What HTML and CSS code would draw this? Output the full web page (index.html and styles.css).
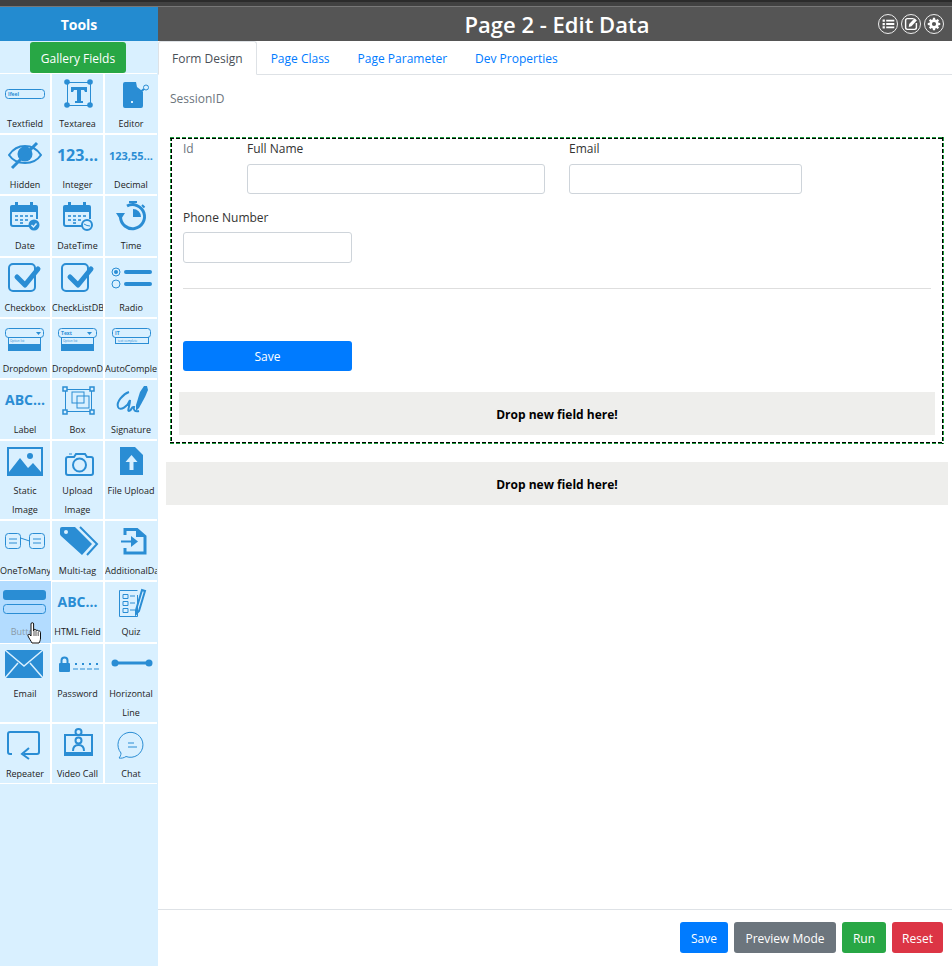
FILE: index.html
```html
<!DOCTYPE html>
<html>
<head>
    <title>Page 2 - Edit Data</title>
    <link rel="stylesheet" href="styles.css">
</head>
<body>
    <div class="topstrip"></div>
    <div class="app">
        <aside class="sidebar">
            <div class="tools-title">Tools</div>
            <div class="gallery-row"><button class="btn btn-green gallery-btn">Gallery Fields</button></div>
            <div class="tool-grid">
                <div class="tool">
                    <svg class="ic" viewBox="0 0 50 40"><rect class="ln" x="5.500" y="15.500" width="39" height="9" rx="3"/><text class="tiny" x="8" y="22">Ifeel</text></svg>
                    <span>Textfield</span>
                </div>
                <div class="tool">
                    <svg class="ic" viewBox="0 0 50 40"><rect class="ln" x="14.500" y="8.500" width="23" height="23"/><path class="fl" d="M18 13h16v5h-2l-1-2h-3v11h2v2h-8v-2h2V16h-3l-1 2h-2z"/><circle class="fl" cx="14" cy="8" r="2.800"/><circle class="fl" cx="37" cy="8" r="2.800"/><circle class="fl" cx="14" cy="31" r="2.800"/><circle class="fl" cx="37" cy="31" r="2.800"/></svg>
                    <span>Textarea</span>
                </div>
                <div class="tool">
                    <svg class="ic" viewBox="0 0 50 40"><path class="fl" d="M19 8h11l1 5 4 3 2 2v14a2 2 0 0 1-2 2H19a2 2 0 0 1-2-2V10a2 2 0 0 1 2-2z"/><path class="ln2" d="M32 20l6-5"/><circle class="ln" cx="40" cy="13.500" r="2.500"/><rect x="25" y="27" width="2" height="2" fill="#d9f0ff"/></svg>
                    <span>Editor</span>
                </div>

                <div class="tool">
                    <svg class="ic" viewBox="0 0 50 40"><path class="ln2" d="M9 20c4-6 10-9 16-9s12 3 16 9c-4 6-10 8-16 8S13 26 9 20z"/><circle class="fl" cx="25" cy="19" r="7.500"/><path class="ln3" d="M12 33L37 8"/></svg>
                    <span>Hidden</span>
                </div>
                <div class="tool">
                    <div class="ic-text big">123...</div>
                    <span>Integer</span>
                </div>
                <div class="tool">
                    <div class="ic-text small">123,55...</div>
                    <span>Decimal</span>
                </div>

                <div class="tool">
                    <svg class="ic" viewBox="0 0 50 40"><path class="fl" d="M12 9h24a2 2 0 0 1 2 2v5H10v-5a2 2 0 0 1 2-2z"/><path class="fl" d="M15 6h3v6h-3zM30 6h3v6h-3z"/><path class="ln2" d="M11 16v12a2 2 0 0 0 2 2h17M37 16v7"/><path class="dots" d="M15 19h3v2h-3zM20 19h3v2h-3zM25 19h3v2h-3zM30 19h3v2h-3zM15 23h3v2h-3zM20 23h3v2h-3zM25 23h3v2h-3zM20 26h3v2h-3z"/><circle class="fl" cx="34" cy="29" r="5.500"/><path class="wh" d="M31.500 29l2 2 3-3.500"/></svg>
                    <span>Date</span>
                </div>
                <div class="tool">
                    <svg class="ic" viewBox="0 0 50 40"><path class="fl" d="M12 9h24a2 2 0 0 1 2 2v5H10v-5a2 2 0 0 1 2-2z"/><path class="fl" d="M15 6h3v6h-3zM30 6h3v6h-3z"/><path class="ln2" d="M11 16v12a2 2 0 0 0 2 2h17M37 16v7"/><path class="dots" d="M15 19h3v2h-3zM20 19h3v2h-3zM25 19h3v2h-3zM30 19h3v2h-3zM15 23h3v2h-3zM20 23h3v2h-3zM25 23h3v2h-3zM20 26h3v2h-3z"/><circle class="ln2 bgf" cx="34" cy="29" r="5"/><path class="ln" d="M31 28l3 1.500 3 .5"/></svg>
                    <span>DateTime</span>
                </div>
                <div class="tool">
                    <svg class="ic" viewBox="0 0 50 40"><path class="ln3" d="M21 10a12 12 0 1 1-6.500 11"/><path class="fl" d="M10 17h9l-4.500 7zM27 13a8 8 0 0 1 8 8h-8z"/><path class="ln2" d="M23 6h8M27 6v3M36 9l2.500 2.500"/></svg>
                    <span>Time</span>
                </div>

                <div class="tool">
                    <svg class="ic" viewBox="0 0 50 40"><rect class="ln2" x="9" y="6" width="26" height="27" rx="4"/><path class="ln4" d="M17 19l8 8 13-16"/></svg>
                    <span>Checkbox</span>
                </div>
                <div class="tool">
                    <svg class="ic" viewBox="0 0 50 40"><rect class="ln2" x="9" y="6" width="26" height="27" rx="4"/><path class="ln4" d="M17 19l8 8 13-16"/></svg>
                    <span>CheckListDB</span>
                </div>
                <div class="tool">
                    <svg class="ic" viewBox="0 0 50 40"><circle class="ln" cx="10" cy="14" r="4"/><circle class="fl" cx="10" cy="14" r="2"/><circle class="ln" cx="10" cy="26" r="4"/><path class="ln4 thin" d="M20 14h24M20 26h24"/></svg>
                    <span>Radio</span>
                </div>

                <div class="tool">
                    <svg class="ic" viewBox="0 0 50 40"><rect class="ln" x="5.500" y="9.500" width="38" height="9" rx="3"/><path class="fl" d="M36 13h5l-2.500 3z"/><rect class="ln" x="8.500" y="18.500" width="32" height="13"/><rect class="fl" x="9" y="25" width="31" height="6"/><text class="tiny micro" x="10" y="23">Option list</text></svg>
                    <span>Dropdown</span>
                </div>
                <div class="tool">
                    <svg class="ic" viewBox="0 0 50 40"><rect class="ln" x="5.500" y="9.500" width="38" height="9" rx="3"/><path class="fl" d="M34 13h5l-2.500 3z"/><text class="tiny" x="8" y="16">Text</text><rect class="ln" x="8.500" y="18.500" width="32" height="13"/><rect class="fl" x="9" y="25" width="31" height="6"/><text class="tiny micro" x="10" y="23">Option list</text></svg>
                    <span>DropdownDB</span>
                </div>
                <div class="tool">
                    <svg class="ic" viewBox="0 0 50 40"><rect class="ln" x="6.500" y="9.500" width="38" height="9" rx="3"/><text class="tiny" x="9" y="16">IT</text><rect class="ln" x="9.500" y="18.500" width="33" height="6"/><text class="tiny micro" x="12" y="23">text complete</text></svg>
                    <span>AutoComplete</span>
                </div>

                <div class="tool">
                    <div class="ic-text mid">ABC...</div>
                    <span>Label</span>
                </div>
                <div class="tool">
                    <svg class="ic" viewBox="0 0 50 40"><rect class="ln" x="12.500" y="9.500" width="26" height="22"/><rect class="ln" x="19" y="12" width="12" height="11"/><rect class="ln" x="24" y="16" width="12" height="12"/><rect class="sq" x="10" y="7" width="4" height="4"/><rect class="sq" x="37" y="7" width="4" height="4"/><rect class="sq" x="10" y="30" width="4" height="4"/><rect class="sq" x="37" y="30" width="4" height="4"/></svg>
                    <span>Box</span>
                </div>
                <div class="tool">
                    <svg class="ic" viewBox="0 0 50 40"><path class="ln2" d="M23 12C17 14 10 22 12 27c2 5 10-1 12-7 0 6-3 11-1 11 3 0 2-5 5-4-1 3 1 5 5 4"/><path class="fl" d="M34 12l4-6h3l1 4-3 7-6 11-3 3v-6z"/></svg>
                    <span>Signature</span>
                </div>

                <div class="tool">
                    <svg class="ic" viewBox="0 0 50 40"><rect class="fl" x="7" y="6" width="36" height="29"/><path fill="#d9f0ff" d="M9 8h32v23l-8-9-5 5-8-10L9 31z"/><circle class="fl" cx="30" cy="15" r="3"/></svg>
                    <span>Static Image</span>
                </div>
                <div class="tool">
                    <svg class="ic" viewBox="0 0 50 40"><path class="ln2" d="M15 16h6l2-3h9l2 3h4a2 2 0 0 1 2 2v14a2 2 0 0 1-2 2H15a2 2 0 0 1-2-2V18a2 2 0 0 1 2-2z"/><circle class="ln2" cx="26.500" cy="24" r="6.500"/><path class="ln" d="M16 13h3"/></svg>
                    <span>Upload Image</span>
                </div>
                <div class="tool">
                    <svg class="ic" viewBox="0 0 50 40"><path class="fl" d="M14 6h15l8 8v20H14z"/><path fill="#d9f0ff" d="M25.500 14l6 7h-4v8h-4v-8h-4z"/></svg>
                    <span>File Upload</span>
                </div>

                <div class="tool">
                    <svg class="ic" viewBox="0 0 50 40"><rect class="ln" x="5.500" y="12.500" width="15" height="15" rx="3"/><rect class="ln" x="29.500" y="12.500" width="15" height="15" rx="3"/><path class="ln" d="M9 18h8M9 22h8M33 18h8M33 22h8M20.500 17l9 3"/></svg>
                    <span>OneToMany</span>
                </div>
                <div class="tool">
                    <svg class="ic" viewBox="0 0 50 40"><path class="fl" d="M9 6h13l17 17-10 11L8 15a3 3 0 0 1-1-2V8a2 2 0 0 1 2-2z"/><circle cx="13" cy="11" r="2" fill="#d9f0ff"/><path class="ln2" d="M27 6l17 17-10 11"/></svg>
                    <span>Multi-tag</span>
                </div>
                <div class="tool">
                    <svg class="ic" viewBox="0 0 50 40"><path class="ln3" d="M19 14V8.500h12l8 7V32H19v-5"/><path class="fl" d="M30 8l9 8h-9z"/><path class="ln2" d="M15 20.500h14"/><path class="fl" d="M25 15l7 5.500-7 5.500z"/></svg>
                    <span>AdditionalData</span>
                </div>

                <div class="tool tool-hover">
                    <svg class="ic" viewBox="0 0 50 40"><rect class="fl" x="3" y="8" width="43" height="10" rx="3"/><rect class="ln" x="3.500" y="22.500" width="42" height="9" rx="3"/></svg>
                    <span>Button</span>
                </div>
                <div class="tool">
                    <div class="ic-text mid">ABC...</div>
                    <span>HTML Field</span>
                </div>
                <div class="tool">
                    <svg class="ic" viewBox="0 0 50 40"><path class="ln" d="M31.500 13V34.500h-18V8.500h18"/><path class="ln" d="M17 12.500h5v4h-5zM17 19.500h5v4h-5zM17 26.500h5v4h-5z"/><path class="ln" d="M24 14h5M24 21h5M24 28h5"/><path class="ln2" d="M30 28l6-20 3 1-6 20-3 3z"/></svg>
                    <span>Quiz</span>
                </div>

                <div class="tool">
                    <svg class="ic" viewBox="0 0 50 40"><rect class="fl" x="5" y="6" width="38" height="28"/><path class="wh" d="M5 6l19 16L43 6M5 34l13-15M43 34L30 19"/></svg>
                    <span>Email</span>
                </div>
                <div class="tool">
                    <svg class="ic" viewBox="0 0 50 40"><rect class="fl" x="6" y="19" width="11" height="9" rx="1"/><path class="ln2" d="M8.500 19v-2.500a3 3 0 0 1 6 0V19"/><path class="ln" d="M20 25h27" stroke-dasharray="5 2"/><path class="dots2" d="M22 19h2v2h-2zM29 19h2v2h-2zM36 19h2v2h-2zM43 19h2v2h-2z"/></svg>
                    <span>Password</span>
                </div>
                <div class="tool">
                    <svg class="ic" viewBox="0 0 50 40"><path class="ln3" d="M7 19h38"/><circle class="fl" cx="9" cy="19" r="3.500"/><circle class="fl" cx="43" cy="19" r="3.500"/></svg>
                    <span>Horizontal Line</span>
                </div>

                <div class="tool">
                    <svg class="ic" viewBox="0 0 50 40"><path class="ln2" d="M12 30h-2a2 2 0 0 1-2-2V10a2 2 0 0 1 2-2h27a2 2 0 0 1 2 2v18a2 2 0 0 1-2 2H24"/><path class="ln2" d="M29 24l-7 6 7 5"/></svg>
                    <span>Repeater</span>
                </div>
                <div class="tool">
                    <svg class="ic" viewBox="0 0 50 40"><rect class="ln2" x="12" y="11" width="27" height="20"/><path class="fl" d="M12 28h27v4H12z"/><circle class="ln2" cx="25.500" cy="16.500" r="3"/><path class="ln2" d="M20 27c0-4 2-6 5.500-6s5.500 2 5.500 6"/><circle class="ln2 bgf" cx="25.500" cy="8" r="3"/></svg>
                    <span>Video Call</span>
                </div>
                <div class="tool">
                    <svg class="ic" viewBox="0 0 50 40"><path class="ln" d="M15 29a12.500 12.500 0 1 1 5 3.500c-2 1.500-5 2-7 1.500 1-1 2-3 2-5z"/><path class="ln" d="M22 19h6M22 23h9"/></svg>
                    <span>Chat</span>
                </div>
            </div>

            <svg class="hand" viewBox="0 0 16 24">
                <path fill="#fff" stroke="#111" stroke-width="1" stroke-linejoin="round" d="M4 2a1.300 1.300 0 0 1 2.600 0v7l.4-1.500c1.400-.4 2 .1 2 1 1-.6 2-.2 2.200.6 1-.5 2.200 0 2.300 1.200V16c0 2-.6 3.500-1.500 5H5c-1-2-2.500-4-4-7-.5-1.300.8-2.300 1.800-1.300L4 14z"/>
                <path stroke="#111" stroke-width=".7" d="M7 9v5M9 9v5M11.200 10v4"/>
            </svg>
        </aside>

        <main class="main">
            <header class="page-head">
                <h1>Page 2 - Edit Data</h1>
                <div class="head-icons">
                    <span class="round-ic"><svg viewBox="0 0 20 20"><path class="wh-fill" d="M4 5h2.500v2.500H4zM4 8.800h2.500v2.500H4zM4 12.600h2.500v2.500H4zM8 5.200h9v2H8zM8 9h9v2H8zM8 12.800h9v2H8z"/></svg></span>
                    <span class="round-ic"><svg viewBox="0 0 20 20"><path fill="none" stroke="#fff" stroke-width="1.600" d="M13 4H6a2 2 0 0 0-2 2v8a2 2 0 0 0 2 2h8a2 2 0 0 0 2-2V9"/><path class="wh-fill" d="M8 10l6-6.500 2.500 2.500-6 6.500-3 .7z"/></svg></span>
                    <span class="round-ic"><svg viewBox="-3 -3 26 26"><path class="wh-fill" fill-rule="evenodd" d="M8.500 1h3l.4 2.500 1.300.6 2-1.400 2.100 2.100-1.400 2 .6 1.300 2.500.4v3l-2.500.4-.6 1.300 1.400 2-2.100 2.100-2-1.400-1.300.6-.4 2.500h-3l-.4-2.500-1.300-.6-2 1.400-2.100-2.100 1.400-2-.6-1.300-2.500-.4v-3l2.500-.4.6-1.300-1.400-2 2.100-2.100 2 1.400 1.300-.6zM10 7a3 3 0 1 0 0 6 3 3 0 0 0 0-6z"/></svg></span>
                </div>
            </header>

            <nav class="tabs">
                <a class="tab active">Form Design</a>
                <a class="tab">Page Class</a>
                <a class="tab">Page Parameter</a>
                <a class="tab">Dev Properties</a>
            </nav>

            <div class="content">
                <div class="session">SessionID</div>

                <section class="form-box">
                    <div class="form-row">
                        <div class="col col-id"><label class="muted">Id</label></div>
                        <div class="col col-name"><label>Full Name</label><input type="text"></div>
                        <div class="col col-email"><label>Email</label><input type="text"></div>
                    </div>
                    <div class="form-row row-phone">
                        <div class="col col-phone"><label>Phone Number</label><input type="text"></div>
                    </div>
                    <hr>
                    <button class="btn btn-blue form-save">Save</button>
                    <div class="drop inner">Drop new field here!</div>
                </section>

                <div class="drop outer">Drop new field here!</div>
            </div>

            <footer class="actions">
                <button class="btn btn-blue act-save">Save</button>
                <button class="btn btn-gray act-preview">Preview Mode</button>
                <button class="btn btn-green act-run">Run</button>
                <button class="btn btn-red act-reset">Reset</button>
            </footer>
        </main>
    </div>
</body>
</html>
```

FILE: styles.css
```css
* {
    box-sizing: border-box;
}

html, body {
    height: 100%;
}

body {
    margin: 0;
    overflow: hidden;
    font-family: "Open Sans", "Noto Sans", Arial, sans-serif;
    font-size: 12px;
    color: #333;
    background-color: #fff;
}

.topstrip {
    height: 7px;
    background: linear-gradient(#2b2b2b, #2b2b2b) 100px 0 / 100% 2px no-repeat, #414141;
    border-bottom: 1px solid #777;
}

.app {
    display: flex;
    height: 959px;
}

/* 왼쪽 도구 패널 */
.sidebar {
    position: relative;
    flex: 0 0 158px;
    width: 158px;
    overflow: hidden;
    background-color: #d9f0ff;
}

.tools-title {
    height: 34px;
    line-height: 36px;
    text-align: center;
    font-size: 14px;
    font-weight: 700;
    color: #fff;
    background-color: #238bd0;
}

.gallery-row {
    display: flex;
    justify-content: center;
    height: 32px;
    padding-top: 1px;
    padding-right: 2px;
}

.tool-grid {
    display: grid;
    grid-template-columns: 50px 51px 52px;
    column-gap: 2px;
    row-gap: 2px;
    width: 158px;
    padding: 1px 0;
    background-color: #fff;
    border-right: 1px solid #d9f0ff;
}

.tool {
    display: flex;
    flex-direction: column;
    align-items: center;
    min-height: 59.2px;
    overflow: hidden;
    background-color: #d9f0ff;
}

.tool span {
    display: block;
    width: 100%;
    font-size: 9px;
    line-height: 19px;
    color: #222;
    text-align: center;
}

.tool-hover {
    background-color: #b3dcff;
    box-shadow: 0 0 0 1px #b3dcff;
    overflow: visible;
}

.tool-hover span {
    color: #8a9aa8;
}

.ic {
    display: block;
    flex: 0 0 40px;
    width: 50px;
    height: 40px;
}

.ic-text {
    flex: 0 0 40px;
    width: 100%;
    font-weight: 700;
    color: #2a8dd4;
    text-align: center;
    white-space: nowrap;
    overflow: hidden;
}

.ic-text.big {
    font-size: 16px;
    line-height: 41px;
}

.ic-text.mid {
    font-size: 14px;
    line-height: 39px;
}

.ic-text.small {
    font-size: 11px;
    line-height: 41px;
}

/* 아이콘 공통 */
.fl {
    fill: #2a8dd4;
}

.ln, .ln2, .ln3, .ln4 {
    fill: none;
    stroke: #2a8dd4;
}

.ln {
    stroke-width: 1;
}

.ln2 {
    stroke-width: 2;
}

.ln3 {
    stroke-width: 3;
}

.ln4 {
    stroke-width: 5;
    stroke-linecap: round;
    stroke-linejoin: round;
}

.ln4.thin {
    stroke-width: 4;
}

.bgf {
    fill: #d9f0ff;
}

.wh {
    fill: none;
    stroke: #d9f0ff;
    stroke-width: 1.500;
}

.sq {
    fill: #d9f0ff;
    stroke: #2a8dd4;
    stroke-width: 1.500;
}

.dots {
    fill: #2a8dd4;
    opacity: .8;
}

.dots2 {
    fill: #2a8dd4;
}

.tiny {
    font-size: 5px;
    fill: #2a8dd4;
    font-weight: 700;
}

.tiny.micro {
    font-size: 3px;
    font-weight: 400;
}

.hand {
    position: absolute;
    left: 27px;
    top: 615px;
    width: 16px;
    height: 24px;
}

/* 오른쪽 영역 */
.main {
    display: flex;
    flex-direction: column;
    flex: 1;
    min-width: 0;
}

.page-head {
    display: flex;
    align-items: center;
    justify-content: center;
    position: relative;
    height: 34px;
    padding-left: 4px;
    background-color: #555;
}

.page-head h1 {
    margin: 0;
    font-size: 22px;
    font-weight: 600;
    color: #fff;
}

.head-icons {
    position: absolute;
    right: 8px;
    top: 7px;
    display: flex;
    gap: 3px;
}

.round-ic {
    width: 20px;
    height: 20px;
    border: 1px solid #eee;
    border-radius: 50%;
    display: flex;
}

.round-ic svg {
    width: 18px;
    height: 18px;
}

.wh-fill {
    fill: #fff;
}

.tabs {
    display: flex;
    height: 34px;
    border-bottom: 1px solid #dee2e6;
}

.tab {
    height: 34px;
    padding: 0 13px;
    line-height: 33px;
    color: #007bff;
    border: 1px solid transparent;
    border-radius: 3px 3px 0 0;
}

.active {
    color: #495057;
    background-color: #fff;
    border-color: #dee2e6 #dee2e6 #fff;
}

.content {
    flex: 1;
    padding: 0 4px 0 8px;
}

.session {
    height: 62px;
    padding: 15px 4px 0;
    color: #6c757d;
}

/* 점선 테두리: 바깥 초록 + 안쪽 검정 */
.form-box {
    height: 307px;
    margin: 0 0 0 4px;
    width: 774px;
    padding: 3px 9px 0;
    background:
        repeating-linear-gradient(90deg, #1a9a3a 0 4px, transparent 4px 6px) 0 0 / 100% 1px no-repeat,
        repeating-linear-gradient(90deg, #000 0 4px, transparent 4px 6px) 0 1px / 100% 1px no-repeat,
        repeating-linear-gradient(90deg, #1a9a3a 0 4px, transparent 4px 6px) 0 100% / 100% 1px no-repeat,
        repeating-linear-gradient(90deg, #000 0 4px, transparent 4px 6px) 0 calc(100% - 1px) / 100% 1px no-repeat,
        repeating-linear-gradient(#1a9a3a 0 4px, transparent 4px 6px) 0 0 / 1px 100% no-repeat,
        repeating-linear-gradient(#000 0 4px, transparent 4px 6px) 1px 0 / 1px 100% no-repeat,
        repeating-linear-gradient(#1a9a3a 0 4px, transparent 4px 6px) 100% 0 / 1px 100% no-repeat,
        repeating-linear-gradient(#000 0 4px, transparent 4px 6px) calc(100% - 1px) 0 / 1px 100% no-repeat;
}

.form-row {
    display: flex;
    gap: 24px;
    padding-left: 4px;
}

.col label {
    display: block;
    height: 24px;
    line-height: 17px;
}

.col input {
    display: block;
    width: 100%;
    height: 30px;
    border: 1px solid #ced4da;
    border-radius: 3px;
    background-color: #fff;
}

.col-id {
    width: 40px;
}

.col-name {
    width: 298px;
}

.col-email {
    width: 233px;
}

.row-phone {
    margin-top: 15px;
}

.col-phone {
    width: 169px;
}

.col-phone label {
    height: 23px;
}

.col-phone input {
    height: 31px;
}

.muted {
    color: #6c757d;
}

hr {
    height: 1px;
    margin: 25px 4px 0;
    border: 0;
    background-color: #dedede;
}

.drop {
    height: 43px;
    line-height: 45px;
    text-align: center;
    font-weight: 700;
    color: #000;
    background-color: #eeeeec;
}

.inner {
    margin-top: 21px;
}

.outer {
    margin-top: 18px;
}

.actions {
    display: flex;
    justify-content: flex-end;
    gap: 6px;
    height: 57px;
    padding: 12px 9px 0 0;
    border-top: 1px solid #dee2e6;
}

.btn {
    height: 31px;
    padding: 1px 0 0;
    border: 0;
    border-radius: 3px;
    color: #fff;
    font-family: inherit;
    font-size: 12px;
    white-space: nowrap;
}

.gallery-btn {
    width: 96px;
}

.form-save {
    display: block;
    width: 169px;
    height: 30px;
    margin: 52px 0 0 4px;
    padding: 0;
}

.act-save {
    width: 48px;
}

.act-preview {
    width: 102px;
}

.act-run {
    width: 44px;
}

.act-reset {
    width: 51px;
}

.btn-blue {
    background-color: #007bff;
}

.btn-gray {
    background-color: #6c757d;
}

.btn-green {
    background-color: #28a745;
}

.btn-red {
    background-color: #dc3545;
}
```
